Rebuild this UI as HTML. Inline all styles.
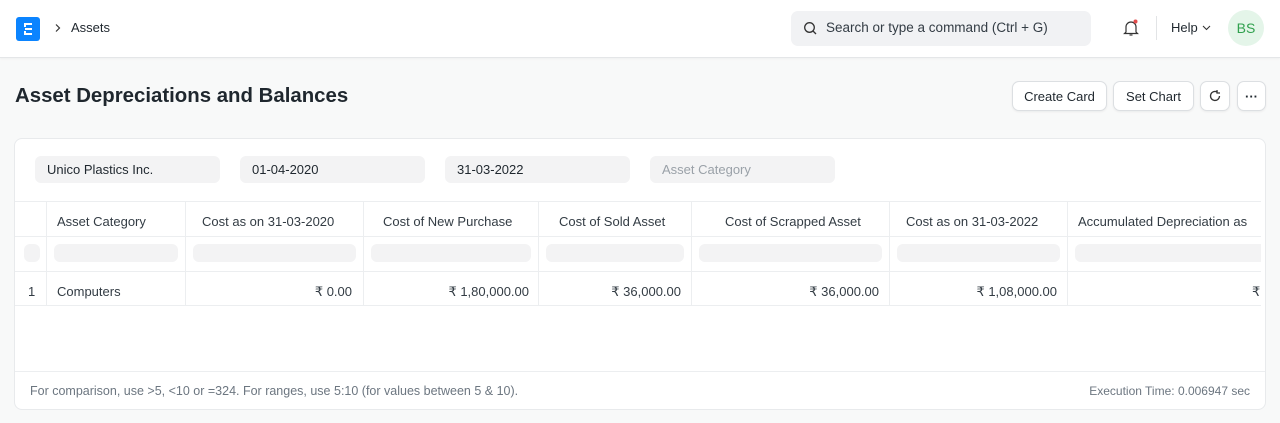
<!DOCTYPE html>
<html><head><meta charset="utf-8"><style>
*{box-sizing:border-box;margin:0;padding:0}
body{width:1280px;height:423px;background:#f8f9f9;font-family:"Liberation Sans",sans-serif;color:#1f272e;position:relative;overflow:hidden;font-size:13px}
.a{position:absolute}
.nav{left:0;top:0;width:1280px;height:58px;background:#fff;border-bottom:1px solid #e4e6e8;box-shadow:0 1px 2px rgba(0,0,0,.04)}
.btn{position:absolute;top:81px;height:30px;background:#fff;border:1px solid #dcdfe2;border-radius:7px;box-shadow:0 1px 2px rgba(0,0,0,.06);font-size:13px;display:flex;align-items:center;justify-content:center}
.card{left:14px;top:138px;width:1252px;height:272px;background:#fff;border:1px solid #e8eaec;border-radius:8px;overflow:hidden}
.f{position:absolute;top:17px;height:27px;width:185px;background:#f3f3f4;border-radius:6px;padding-left:12px;line-height:27px;font-size:13px}
.vl{position:absolute;top:63px;height:104px;width:1px;background:#eceef0}
.hl{position:absolute;left:0;width:1246px;height:1px;background:#eceef0}
.t{position:absolute;font-size:13px;color:#333c44;white-space:nowrap}
.sk{position:absolute;top:105px;height:18px;background:#f3f3f4;border-radius:6px}
</style></head><body>
<div class="a nav">
 <div class="a" style="left:16px;top:17px;width:24px;height:24px;background:#0b84ff;border-radius:3px"></div>
 <div class="a" style="left:24px;top:23px;width:8px;height:2px;background:#fff"></div>
 <div class="a" style="left:25px;top:28px;width:7px;height:2px;background:#fff"></div>
 <div class="a" style="left:24px;top:33px;width:8px;height:2px;background:#fff"></div>
 <div class="a" style="left:24px;top:23px;width:2px;height:4px;background:#fff"></div>
 <div class="a" style="left:24px;top:31px;width:2px;height:4px;background:#fff"></div>
 <svg class="a" style="left:54px;top:23px" width="8" height="10" viewBox="0 0 8 10"><path d="M2 1.5l3.5 3.5-3.5 3.5" fill="none" stroke="#333" stroke-width="1.2"/></svg>
 <div class="a" style="left:71px;top:20px;font-size:13px;color:#1f272e">Assets</div>
 <div class="a" style="left:791px;top:11px;width:300px;height:35px;background:#f1f2f4;border-radius:7px"></div>
 <svg class="a" style="left:803px;top:21px" width="15" height="15" viewBox="0 0 15 15"><circle cx="6.5" cy="6.5" r="4.8" fill="none" stroke="#333" stroke-width="1.3"/><path d="M10 10l3 3" stroke="#333" stroke-width="1.3"/></svg>
 <div class="a" style="left:826px;top:20px;font-size:13.5px;color:#333c44">Search or type a command (Ctrl + G)</div>
 <svg class="a" style="left:1122px;top:18px" width="18" height="20" viewBox="0 0 18 20"><path d="M4 14V9a5 5 0 0 1 10 0v5l1.5 1.5h-13z" fill="none" stroke="#333" stroke-width="1.2"/><path d="M7.5 17h3" stroke="#333" stroke-width="1.2"/><circle cx="13.5" cy="3.5" r="2" fill="#e24c4c"/></svg>
 <div class="a" style="left:1156px;top:16px;width:1px;height:24px;background:#e2e4e6"></div>
 <div class="a" style="left:1171px;top:20px;font-size:13px">Help</div>
 <svg class="a" style="left:1202px;top:25px" width="9" height="6" viewBox="0 0 9 6"><path d="M1 1l3.5 3.5L8 1" fill="none" stroke="#333" stroke-width="1.1"/></svg>
 <div class="a" style="left:1228px;top:10px;width:36px;height:36px;border-radius:50%;background:#e4f5e9;color:#30a14e;font-size:14px;text-align:center;line-height:36px">BS</div>
</div>
<div class="a" style="left:15px;top:85px;font-size:20.4px;font-weight:bold;color:#1f272e">Asset Depreciations and Balances</div>
<div class="btn" style="left:1012px;width:95px">Create Card</div>
<div class="btn" style="left:1113px;width:81px">Set Chart</div>
<div class="btn" style="left:1200px;width:30px"><svg width="14" height="14" viewBox="0 0 14 14"><path d="M11.5 7A4.5 4.5 0 1 1 9.5 3.2" fill="none" stroke="#333" stroke-width="1.3"/><path d="M9 1v3h3" fill="none" stroke="#333" stroke-width="1.3"/></svg></div>
<div class="btn" style="left:1237px;width:29px;font-weight:bold">···</div>
<div class="a card">
 <div class="f" style="left:20px">Unico Plastics Inc.</div>
 <div class="f" style="left:225px">01-04-2020</div>
 <div class="f" style="left:430px">31-03-2022</div>
 <div class="f" style="left:635px;color:#9aa1a8">Asset Category</div>
 <div class="hl" style="top:62px"></div>
 <div class="hl" style="top:97px"></div>
 <div class="hl" style="top:132px"></div>
 <div class="hl" style="top:166px"></div>
 <div class="vl" style="left:31px"></div><div class="vl" style="left:170px"></div><div class="vl" style="left:348px"></div><div class="vl" style="left:523px"></div><div class="vl" style="left:676px"></div><div class="vl" style="left:874px"></div><div class="vl" style="left:1052px"></div>
 <div class="t" style="left:42px;top:75px">Asset Category</div>
 <div class="t" style="left:187px;top:75px">Cost as on 31-03-2020</div>
 <div class="t" style="left:368px;top:75px">Cost of New Purchase</div>
 <div class="t" style="left:544px;top:75px">Cost of Sold Asset</div>
 <div class="t" style="left:710px;top:75px">Cost of Scrapped Asset</div>
 <div class="t" style="left:891px;top:75px">Cost as on 31-03-2022</div>
 <div class="t" style="left:1063px;top:75px">Accumulated Depreciation as</div>
 <div class="sk" style="left:9px;width:16px"></div><div class="sk" style="left:39px;width:124px"></div><div class="sk" style="left:178px;width:163px"></div><div class="sk" style="left:356px;width:160px"></div><div class="sk" style="left:531px;width:138px"></div><div class="sk" style="left:684px;width:183px"></div><div class="sk" style="left:882px;width:163px"></div><div class="sk" style="left:1060px;width:186px;border-radius:6px 0 0 6px"></div>
 <div class="t" style="left:13px;top:145px">1</div>
 <div class="t" style="left:42px;top:145px">Computers</div>
 <div class="t" style="right:913px;top:145px">₹ 0.00</div>
 <div class="t" style="right:736px;top:145px">₹ 1,80,000.00</div>
 <div class="t" style="right:584px;top:145px">₹ 36,000.00</div>
 <div class="t" style="right:386px;top:145px">₹ 36,000.00</div>
 <div class="t" style="right:208px;top:145px">₹ 1,08,000.00</div>
 <div class="t" style="left:1237px;top:145px">₹</div>
 <div class="hl" style="top:232px;width:1252px"></div>
 <div class="t" style="left:15px;top:245px;font-size:12.5px;color:#6c7680">For comparison, use &gt;5, &lt;10 or =324. For ranges, use 5:10 (for values between 5 &amp; 10).</div>
 <div class="t" style="right:15px;top:245px;font-size:12px;color:#6c7680">Execution Time: 0.006947 sec</div>
</div>
</body></html>
